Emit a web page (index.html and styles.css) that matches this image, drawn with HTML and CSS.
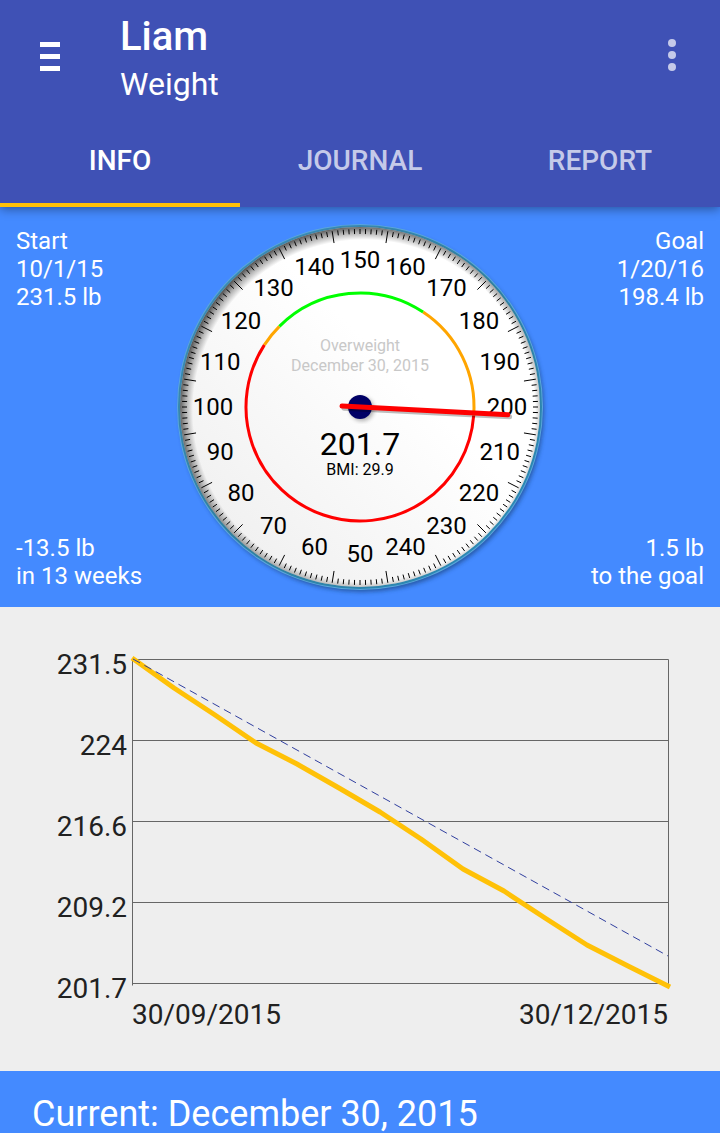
FILE: index.html
```html
<!DOCTYPE html>
<html lang="en">
<head>
<meta charset="utf-8">
<meta name="viewport" content="width=device-width, initial-scale=1">
<title>Liam – Weight</title>
<link rel="stylesheet" href="styles.css">
</head>
<body>
<header class="app-header">
  <div class="toolbar">
    <button class="icon-button menu" type="button" aria-label="Menu">
      <svg width="20" height="30" viewBox="0 0 20 30" fill="#fff" aria-hidden="true"><rect y="1" width="20" height="5"/><rect y="13" width="20" height="5"/><rect y="25" width="20" height="5"/></svg>
    </button>
    <div class="titles">
      <h1 class="title">Liam</h1>
      <p class="subtitle">Weight</p>
    </div>
    <button class="icon-button more" type="button" aria-label="More options">
      <svg width="8" height="34" viewBox="0 0 8 34" fill="#c5cae9" aria-hidden="true"><circle cx="4" cy="4" r="4"/><circle cx="4" cy="16" r="4"/><circle cx="4" cy="28" r="4"/></svg>
    </button>
  </div>
  <nav class="tabs">
    <button class="tab active" type="button">INFO</button>
    <button class="tab" type="button">JOURNAL</button>
    <button class="tab" type="button">REPORT</button>
  </nav>
</header>
<main>
  <section class="summary">
    <div class="side">
      <p>Start<br>10/1/15<br>231.5 lb</p>
      <p>-13.5 lb<br>in 13 weeks</p>
    </div>
    <svg class="gauge" viewBox="-184 -184 376 376" role="img" aria-label="Weight gauge">
      <defs>
        <linearGradient id="face" x1="0" y1="1" x2="1" y2="0"><stop offset="0" stop-color="#ececec"/><stop offset=".6" stop-color="#fff"/></linearGradient>
        <linearGradient id="rim" x1="0" y1="0" x2="1" y2="1"><stop offset="0" stop-color="#3f8fbc"/><stop offset=".5" stop-color="#2f7f9f"/><stop offset="1" stop-color="#2a8cbc"/></linearGradient>
        <radialGradient id="shade" gradientUnits="userSpaceOnUse" cx="4" cy="4" r="186"><stop offset=".92" stop-color="#000" stop-opacity="0"/><stop offset=".96" stop-color="#000" stop-opacity=".3"/><stop offset="1" stop-color="#000" stop-opacity=".7"/></radialGradient>
        <filter id="soft" x="-10%" y="-10%" width="120%" height="120%"><feGaussianBlur stdDeviation="2"/></filter>
      </defs>
      <circle cx="2" cy="3" r="182" fill="#123a70" opacity=".6" filter="url(#soft)"/>
      <circle r="183" fill="#5aa6dc"/>
      <circle r="182" fill="url(#rim)"/>
      <circle r="180" fill="url(#face)"/>
      <circle r="180" fill="url(#shade)"/>
      <g id="ticks" class="ticks"></g>
      <g id="labels" class="dial-labels"></g>
      <g id="zones" class="zones"></g>
      <g text-anchor="middle">
        <text class="muted" y="-56">Overweight</text>
        <text class="muted" y="-36">December 30, 2015</text>
        <text class="value" y="48">201.7</text>
        <text class="bmi" y="68">BMI: 29.9</text>
      </g>
      <circle cx="2" cy="2" r="12" opacity=".3" filter="url(#soft)"/>
      <circle r="12" fill="#000066"/>
      <g transform="rotate(3)" stroke-width="5" stroke-linecap="round">
        <path d="M-16 2H150" stroke="#000" opacity=".25"/>
        <path d="M-18 0H148" stroke="#f00"/>
      </g>
    </svg>
    <div class="side right">
      <p>Goal<br>1/20/16<br>198.4 lb</p>
      <p>1.5 lb<br>to the goal</p>
    </div>
  </section>
  <section class="chart">
    <svg viewBox="0 0 720 464" role="img" aria-label="Weight over time">
      <path class="grid" d="M132 52V378M668 52V376M132 52H668M132 133H668M132 214H668M132 295H668M132 376H668" transform="translate(.5 .5)"/>
      <g class="axis" text-anchor="end">
        <text x="127" y="67">231.5</text><text x="127" y="148">224</text><text x="127" y="229">216.6</text><text x="127" y="310">209.2</text><text x="127" y="391">201.7</text>
      </g>
      <path class="actual" d="M132 51L174 81L215 108L256 136L297 157L339 181L380 205L421 232L463 262L504 284L545 311L587 338L628 359L670 380"/>
      <path class="plan" d="M133 52L668 349"/>
      <text class="axis" x="132" y="417">30/09/2015</text>
      <text class="axis" x="668" y="417" text-anchor="end">30/12/2015</text>
    </svg>
  </section>
  <section class="current"><h2>Current: December 30, 2015</h2></section>
</main>
<script src="gauge.js"></script>
</body>
</html>
```
FILE: styles.css
```css
* { box-sizing: border-box; }
body { margin: 0; background: #eee; font-family: Roboto, "Liberation Sans", sans-serif; }
h1, h2, p { margin: 0; font-weight: 400; }
button { border: 0; padding: 0; background: none; font: inherit; color: inherit; }
svg { display: block; }

.app-header { position: relative; z-index: 1; background: #3f51b5; color: #fff; box-shadow: 0 2px 10px rgba(0, 0, 0, .4); }
.toolbar { display: flex; align-items: center; height: 112px; padding: 0 24px 0 20px; }
.icon-button { display: grid; place-items: center; width: 60px; height: 60px; }
.more { width: 48px; margin-left: auto; }
.titles { padding: 8px 0 0 40px; }
.title { font-size: 40px; line-height: 48px; font-weight: 500; }
.subtitle { font-size: 32px; line-height: 46px; }
.tabs { display: grid; grid-template-columns: repeat(3, 1fr); height: 95px; }
.tab { padding-top: 6px; border-bottom: 4px solid transparent; font-size: 28px; font-weight: 500; color: #c5cae9; }
.tab.active { color: #fff; border-color: #ffc107; }

.summary { display: flex; justify-content: space-between; padding: 16px 16px 8px; background: #448aff; color: #fff; font-size: 24px; line-height: 28px; }
.side { flex: 1; display: flex; flex-direction: column; justify-content: space-between; padding: 4px 0 9px; white-space: nowrap; }
.right { text-align: right; }
.gauge { flex: none; width: 376px; height: 376px; margin: 0 -4px 0 4px; overflow: visible; }
.ticks { stroke: #000; stroke-width: 1; }
.dial-labels { font-size: 24px; text-anchor: middle; }
.zones { fill: none; stroke-width: 3; }
.muted { font-size: 16px; fill: #c8c8c8; }
.value { font-size: 32px; }
.bmi { font-size: 16px; }

.chart svg { width: 100%; height: auto; }
.grid { fill: none; stroke: #666; }
.axis { font-size: 28px; fill: #212121; }
.actual { fill: none; stroke: #ffc107; stroke-width: 5; stroke-linejoin: round; }
.plan { fill: none; stroke: #303f9f; stroke-dasharray: 8 5; }

.current { padding: 21px 32px 20px; background: #448aff; color: #fff; }
.current h2 { font-size: 36px; line-height: 44px; }
```
FILE: gauge.js
```js
const NS = "http://www.w3.org/2000/svg";
const point = (deg, r) => {
  const a = deg * Math.PI / 180;
  return [Math.sin(a) * r, -Math.cos(a) * r];
};
const add = (id, tag, attrs, text) => {
  const el = document.createElementNS(NS, tag);
  for (const key in attrs) el.setAttribute(key, attrs[key]);
  if (text) el.textContent = text;
  document.getElementById(id).appendChild(el);
};

for (let i = 0; i < 200; i++) {
  const deg = i * 1.8;
  const inner = i % 10 === 5 ? 166 : 173;
  add("ticks", "path", { d: `M${point(deg, inner)}L${point(deg, 178)}` });
}

for (let lb = 50; lb < 250; lb += 10) {
  const [x, y] = point((lb - 150) * 1.8, 147);
  add("labels", "text", { x, y: y + 8 }, String(lb));
}

// Dial zones by angle, clockwise from the top
const zones = [
  [33.6, 94.3, "#ffa500"],
  [94.3, 303, "#f00"],
  [303, 315, "#ffa500"],
  [315, 393.6, "#0f0"]
];
for (const [from, to, stroke] of zones) {
  const large = to - from > 180 ? 1 : 0;
  add("zones", "path", { d: `M${point(from, 114)}A114 114 0 ${large} 1 ${point(to, 114)}`, stroke });
}
```
